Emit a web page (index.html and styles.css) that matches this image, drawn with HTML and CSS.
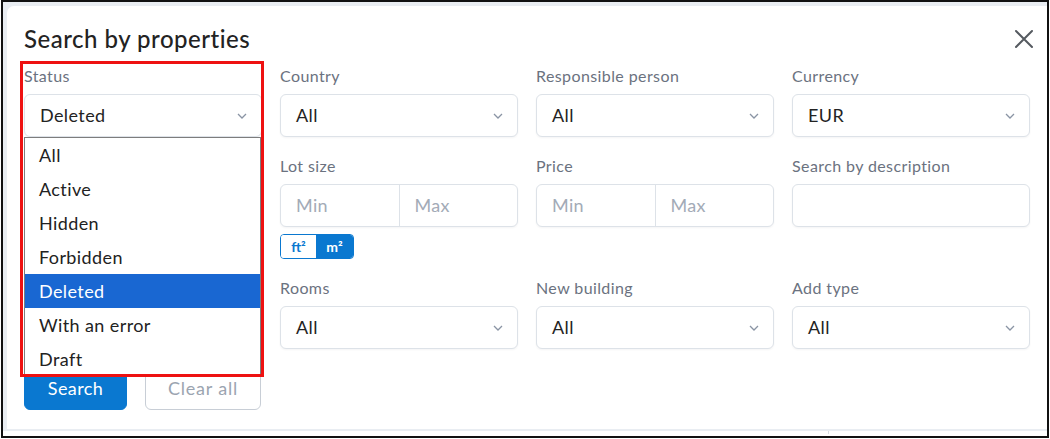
FILE: index.html
```html
<!DOCTYPE html>
<html lang="en">
<head>
<meta charset="utf-8">
<title>Search by properties</title>
<link rel="stylesheet" href="styles.css">
</head>
<body>
<div class="frame">
  <div class="backdrop">
    <div class="modal">
      <div class="modal-head">
        <h1 class="title">Search by properties</h1>
        <button class="close" aria-label="Close">
          <svg width="20" height="20" viewBox="0 0 20 20"><path d="M2 2 L18 18 M18 2 L2 18" stroke="#555a60" stroke-width="2" stroke-linecap="round" fill="none"/></svg>
        </button>
      </div>

      <div class="fields">
        <div class="field status-field">
          <div class="label">Status</div>
          <div class="select"><span>Deleted</span><svg class="chev" width="10" height="6" viewBox="0 0 10 6"><path d="M1 1 L5 5 L9 1" stroke="#8a94a4" stroke-width="1.3" fill="none"/></svg></div>
          <ul class="dropdown">
            <li>All</li>
            <li>Active</li>
            <li>Hidden</li>
            <li>Forbidden</li>
            <li class="selected">Deleted</li>
            <li>With an error</li>
            <li>Draft</li>
          </ul>
          <div class="annotation"></div>
        </div>
        <div class="field">
          <div class="label">Country</div>
          <div class="select"><span>All</span><svg class="chev" width="10" height="6" viewBox="0 0 10 6"><path d="M1 1 L5 5 L9 1" stroke="#8a94a4" stroke-width="1.3" fill="none"/></svg></div>
        </div>
        <div class="field">
          <div class="label">Responsible person</div>
          <div class="select"><span>All</span><svg class="chev" width="10" height="6" viewBox="0 0 10 6"><path d="M1 1 L5 5 L9 1" stroke="#8a94a4" stroke-width="1.3" fill="none"/></svg></div>
        </div>
        <div class="field">
          <div class="label">Currency</div>
          <div class="select"><span>EUR</span><svg class="chev" width="10" height="6" viewBox="0 0 10 6"><path d="M1 1 L5 5 L9 1" stroke="#8a94a4" stroke-width="1.3" fill="none"/></svg></div>
        </div>

        <div class="field"></div>
        <div class="field">
          <div class="label">Lot size</div>
          <div class="range"><span class="ph">Min</span><span class="ph">Max</span></div>
          <div class="units"><span class="unit">ft²</span><span class="unit active">m²</span></div>
        </div>
        <div class="field">
          <div class="label">Price</div>
          <div class="range"><span class="ph">Min</span><span class="ph">Max</span></div>
        </div>
        <div class="field">
          <div class="label">Search by description</div>
          <div class="text-input"></div>
        </div>

        <div class="field"></div>
        <div class="field">
          <div class="label">Rooms</div>
          <div class="select"><span>All</span><svg class="chev" width="10" height="6" viewBox="0 0 10 6"><path d="M1 1 L5 5 L9 1" stroke="#8a94a4" stroke-width="1.3" fill="none"/></svg></div>
        </div>
        <div class="field">
          <div class="label">New building</div>
          <div class="select"><span>All</span><svg class="chev" width="10" height="6" viewBox="0 0 10 6"><path d="M1 1 L5 5 L9 1" stroke="#8a94a4" stroke-width="1.3" fill="none"/></svg></div>
        </div>
        <div class="field">
          <div class="label">Add type</div>
          <div class="select"><span>All</span><svg class="chev" width="10" height="6" viewBox="0 0 10 6"><path d="M1 1 L5 5 L9 1" stroke="#8a94a4" stroke-width="1.3" fill="none"/></svg></div>
        </div>
      </div>

      <div class="actions">
        <button class="btn btn-primary">Search</button>
        <button class="btn btn-outline">Clear all</button>
      </div>
    </div>
    <div class="under">
      <div class="under-left"></div>
      <div class="under-right"></div>
    </div>
  </div>
</div>
</body>
</html>
```

FILE: styles.css
```css
* { box-sizing: border-box; }

html, body {
  margin: 0;
  padding: 0;
  background: #ffffff;
}

body {
  font-family: "Lato", "Noto Sans", sans-serif;
  color: #222;
}

.frame {
  margin-left: 1px;
  width: 1048px;
  height: 438px;
  border: 2px solid #111;
  overflow: hidden;
}

.backdrop {
  height: 100%;
  background: #e9edf2;
  padding: 4px 0 0 4px;
  display: flex;
  flex-direction: column;
}

.modal {
  background: #fff;
  border-radius: 7px 0 0 0;
  height: 423px;
  padding: 18px 14px 0 17px;
}

.modal-head {
  display: flex;
  justify-content: space-between;
  align-items: center;
  height: 30px;
  margin-bottom: 12px;
}

.title {
  margin: 0;
  font-size: 24px;
  letter-spacing: 0.5px;
  font-weight: 500;
  line-height: 30px;
  color: #232323;
}

.close {
  border: 0;
  background: none;
  padding: 0;
  width: 20px;
  height: 20px;
  margin-right: -1px;
  display: flex;
}

.fields {
  display: grid;
  grid-template-columns: repeat(4, 238px);
  column-gap: 18px;
  row-gap: 19px;
}

.field {
  position: relative;
}

.label {
  font-size: 16px;
  letter-spacing: 0.4px;
  line-height: 20px;
  color: #6b7280;
  margin-bottom: 8px;
}

.select, .range, .text-input {
  height: 43px;
  border: 1px solid #dde2e8;
  border-radius: 6px;
  background: #fff;
  box-shadow: 0 1px 2px rgba(30, 40, 60, 0.05);
}

.select {
  display: flex;
  align-items: center;
  justify-content: space-between;
  padding: 0 14px 2px 15px;
  font-size: 18px;
  letter-spacing: 0.4px;
  color: #232323;
}

.chev { display: block; margin-top: 2px; }

.range {
  display: flex;
}

.range .ph {
  flex: 1;
  display: flex;
  align-items: center;
  padding-left: 15px;
  padding-bottom: 1px;
  font-size: 18px;
  letter-spacing: 0.3px;
  color: #a3abb7;
}

.range .ph + .ph {
  border-left: 1px solid #dde2e8;
}

.units {
  display: inline-flex;
  margin-top: 7px;
  height: 25px;
  border: 1.5px solid #0a78d0;
  border-radius: 4px;
  overflow: hidden;
  font-size: 14px;
  font-weight: 700;
}

.unit {
  display: flex;
  align-items: center;
  justify-content: center;
  width: 35px;
  color: #0a78d0;
  background: #fff;
}

.unit.active {
  width: 37px;
  background: #0a78d0;
  color: #fff;
}

.dropdown {
  position: absolute;
  left: 0;
  top: 71px;
  width: 237px;
  margin: 0;
  padding: 0;
  list-style: none;
  background: #fff;
  border: 1px solid #7d7d7d;
  z-index: 5;
}

.dropdown li {
  height: 34px;
  line-height: 34px;
  padding-left: 14px;
  font-size: 18px;
  letter-spacing: 0.4px;
  color: #222;
}

.dropdown li.selected {
  background: #1967d2;
  color: #fff;
}

.annotation {
  position: absolute;
  left: -4px;
  top: -5px;
  width: 244px;
  height: 316px;
  border: 3px solid #ee1111;
  z-index: 6;
  pointer-events: none;
}

.actions {
  display: flex;
  gap: 18px;
  margin-top: 17px;
}

.btn {
  height: 44px;
  border-radius: 6px;
  font-family: inherit;
  font-size: 18px;
  letter-spacing: 0.4px;
  padding: 0;
}

.btn-primary {
  width: 103px;
  background: #0a78d0;
  border: 1px solid #0a78d0;
  color: #fff;
}

.btn-outline {
  width: 116px;
  background: #fff;
  border: 1.5px solid #c8ced6;
  color: #9ba4b0;
  letter-spacing: 0.8px;
}

.under {
  flex: 1;
  margin-top: 2px;
  margin-left: -4px;
  background: #fff;
  display: flex;
}

.under-left {
  width: 826px;
  border-right: 1px solid #d8dde3;
  height: 3px;
}
```
